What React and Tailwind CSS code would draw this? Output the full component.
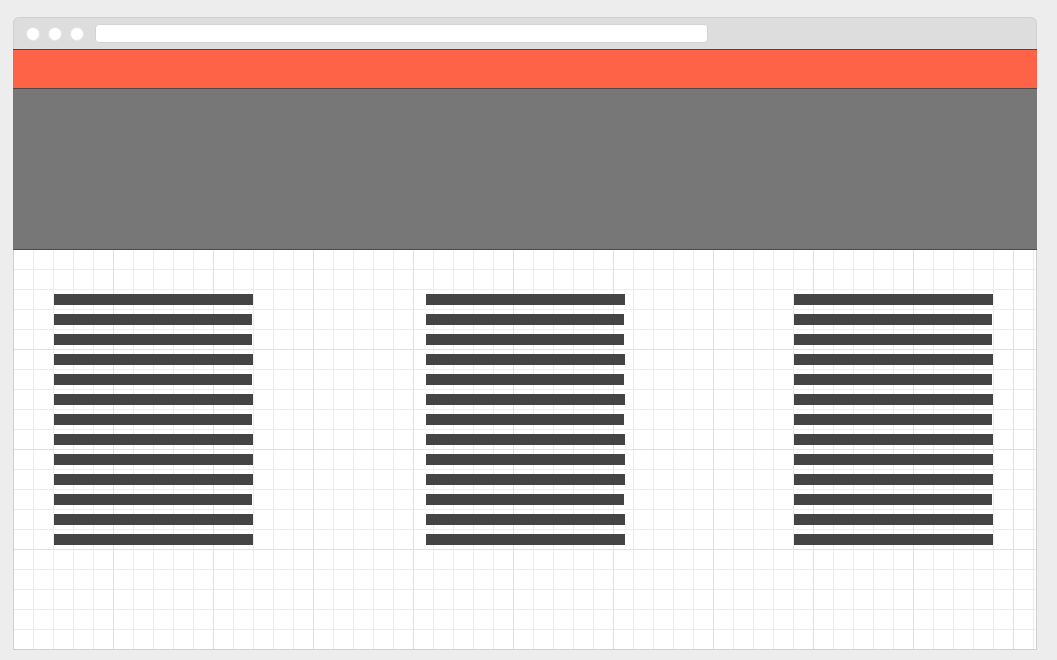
const widths = [199, 198, 198, 199, 198, 199, 198, 199, 199, 199, 198, 199, 199];

function BarColumn({ className = "" }) {
  return (
    <div className={`flex flex-col gap-[9px] ${className}`}>
      {widths.map((w, i) => (
        <div
          key={i}
          className={`h-[11px] bg-[#444444] ${w === 199 ? "w-[199px]" : "w-[198px]"}`}
        />
      ))}
    </div>
  );
}

export default function App() {
  return (
    <div className="min-h-[660px] w-full bg-[#ededed] pt-[17px] pl-[13px] font-['Liberation_Sans',sans-serif]">
      <div className="w-[1024px] h-[633px] flex flex-col">
        {/* title bar */}
        <div className="h-[32px] shrink-0 bg-[#dddddd] border-x border-t border-[#d0d0d0] rounded-t-[6px] flex items-center pl-[12px]">
          <div className="flex gap-[8px]">
            <span className="w-[14px] h-[14px] rounded-full bg-white border border-[#e6e6e6]" />
            <span className="w-[14px] h-[14px] rounded-full bg-white border border-[#e6e6e6]" />
            <span className="w-[14px] h-[14px] rounded-full bg-white border border-[#e6e6e6]" />
          </div>
          <div className="ml-[11px] w-[613px] h-[19px] bg-white rounded-[4px] border border-[#d4d4d4]" />
        </div>

        {/* orange nav */}
        <div className="h-[40px] shrink-0 bg-[#ff6347] border-y border-[#4a4a4a]" />

        {/* hero */}
        <div className="h-[161px] shrink-0 bg-[#777777] border-b border-[#4a4a4a]" />

        {/* content with grid */}
        <div className="flex-1 flex items-start pl-[40px] pt-[44px] border-x border-b border-[#d0d0d0] bg-white bg-[linear-gradient(to_right,transparent_99px,#e1e1e1_99px),linear-gradient(to_bottom,transparent_99px,#e1e1e1_99px),linear-gradient(to_right,transparent_19px,#ececec_19px),linear-gradient(to_bottom,transparent_19px,#ececec_19px)] bg-[size:100px_100px,100px_100px,20px_20px,20px_20px]">
          <BarColumn />
          <BarColumn className="ml-[173px]" />
          <BarColumn className="ml-[169px]" />
        </div>
      </div>
    </div>
  );
}
